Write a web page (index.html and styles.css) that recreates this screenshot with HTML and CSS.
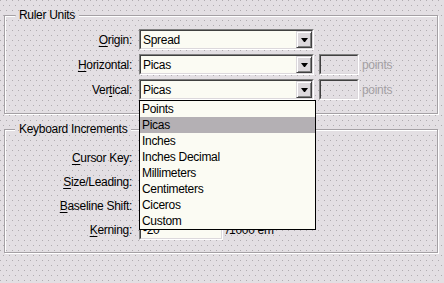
FILE: index.html
```html
<!DOCTYPE html>
<html>
<head>
	<meta charset="UTF-8">
	<title>Units &amp; Increments</title>
<link rel="stylesheet" href="styles.css">
</head>
<body>
	<section class="group ruler">
		<span class="legend">Ruler Units</span>
		<div class="row">
			<label class="lbl"><u>O</u>rigin:</label>
			<div class="combo">
				<div class="combo-in"><span class="combo-text">Spread</span><span class="combo-btn"><i class="arrow"></i></span></div>
			</div>
		</div>
		<div class="row">
			<label class="lbl"><u>H</u>orizontal:</label>
			<div class="combo">
				<div class="combo-in"><span class="combo-text">Picas</span><span class="combo-btn"><i class="arrow"></i></span></div>
			</div>
			<div class="field off"><div class="field-in"></div></div>
			<span class="unit dim">points</span>
		</div>
		<div class="row">
			<label class="lbl">Ver<u>t</u>ical:</label>
			<div class="combo open">
				<div class="combo-in"><span class="combo-text">Picas</span><span class="combo-btn"><i class="arrow"></i></span></div>
				<ul class="drop">
					<li>Points</li>
					<li class="sel">Picas</li>
					<li>Inches</li>
					<li>Inches Decimal</li>
					<li>Millimeters</li>
					<li>Centimeters</li>
					<li>Ciceros</li>
					<li>Custom</li>
				</ul>
			</div>
			<div class="field off"><div class="field-in"></div></div>
			<span class="unit dim">points</span>
		</div>
	</section>
	<section class="group keys">
		<span class="legend">Keyboard Increments</span>
		<div class="row">
			<label class="lbl"><u>C</u>ursor Key:</label>
			<div class="field wide"><div class="field-in"></div></div>
		</div>
		<div class="row">
			<label class="lbl"><u>S</u>ize/Leading:</label>
			<div class="field wide"><div class="field-in"></div></div>
		</div>
		<div class="row">
			<label class="lbl"><u>B</u>aseline Shift:</label>
			<div class="field wide"><div class="field-in"></div></div>
		</div>
		<div class="row">
			<label class="lbl"><u>K</u>erning:</label>
			<div class="field wide"><div class="field-in">-20</div></div>
			<span class="unit">/1000 em</span>
		</div>
	</section>
</body>
</html>
```

FILE: styles.css
```css
html,body{
	margin: 0;
	height: 100%;
}
body{
	box-sizing: border-box;
	padding: 15px 6px 0 4px;
	font: 12px "Liberation Sans", sans-serif;
	letter-spacing: -0.3px;
	color: #000;
	background-color: #e3dfe3;
	background-image:
		conic-gradient(at 1px 1px, transparent 75%, #b0acb0 0),
		conic-gradient(at 1px 1px, transparent 75%, #b0acb0 0);
	background-size: 6px 10px;
	background-position: 0 0, 3px 5px;
	background-attachment: fixed;
}
.group{
	position: relative;
	border: 1px solid #a4a0a4;
	box-shadow: 1px 1px 0 #fff, inset 1px 1px 0 #fff;
	display: flex;
	flex-direction: column;
}
.ruler{
	padding: 13px 0 13px;
	gap: 4px;
}
.keys{
	margin-top: 15px;
	padding: 17px 0 12px;
	gap: 3px;
}
.legend{
	position: absolute;
	left: 10px;
	top: -8px;
	padding: 0 4px;
	line-height: 15px;
	background-color: #e3dfe3;
	background-image:
		conic-gradient(at 1px 1px, transparent 75%, #b0acb0 0),
		conic-gradient(at 1px 1px, transparent 75%, #b0acb0 0);
	background-size: 6px 10px;
	background-position: 0 0, 3px 5px;
	background-attachment: fixed;
}
.row{
	display: flex;
	align-items: center;
	height: 21px;
}
.lbl{
	width: 127px;
	margin-right: 7px;
	text-align: right;
	white-space: nowrap;
	padding-top: 1px;
}
.lbl u{
	text-underline-offset: 2px;
}
.combo{
	position: relative;
	width: 175px;
	height: 21px;
	box-sizing: border-box;
	border: 1px solid;
	border-color: #808080 #fff #fff #808080;
}
.combo-in{
	display: flex;
	height: 100%;
	box-sizing: border-box;
	border: 1px solid;
	border-color: #404040 #dcd8dc #dcd8dc #404040;
	background: #fbfbf3;
}
.combo-text{
	flex: 1;
	padding: 1px 0 0 2px;
	line-height: 16px;
}
.combo-btn{
	width: 16px;
	box-sizing: border-box;
	border: 1px solid;
	border-color: #dcd8dc #404040 #404040 #dcd8dc;
	box-shadow: inset 1px 1px 0 #fff, inset -1px -1px 0 #808080;
	background: #dcd8dc;
	display: flex;
	align-items: center;
	justify-content: center;
}
.arrow{
	width: 1px;
	height: 0;
	border-left: 3px solid transparent;
	border-right: 3px solid transparent;
	border-top: 4px solid #000;
}
.field{
	height: 21px;
	box-sizing: border-box;
	border: 1px solid;
	border-color: #808080 #fff #fff #808080;
}
.field-in{
	height: 100%;
	box-sizing: border-box;
	border: 1px solid;
	border-color: #404040 #dcd8dc #dcd8dc #404040;
	background: #fbfbf3;
	padding: 1px 0 0 2px;
	line-height: 16px;
}
.field.off{
	width: 40px;
	margin-left: 5px;
}
.field.off .field-in{
	background: transparent;
}
.field.wide{
	width: 84px;
}
.unit{
	margin-left: 3px;
	padding-top: 1px;
}
.dim{
	color: #a4a0a4;
}
.drop{
	position: absolute;
	left: -1px;
	top: 100%;
	z-index: 2;
	width: 177px;
	box-sizing: border-box;
	margin: 1px 0 0;
	padding: 0;
	list-style: none;
	border: 1px solid #000;
	background: #fbfbf3;
}
.drop li{
	height: 16px;
	line-height: 16px;
	padding-left: 2px;
}
.drop li.sel{
	background: #b4b0b4;
}
```
